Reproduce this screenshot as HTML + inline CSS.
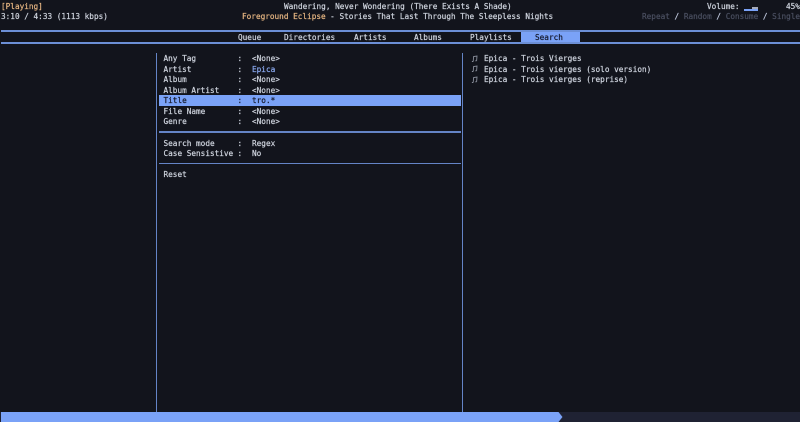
<!DOCTYPE html>
<html>
<head>
<meta charset="utf-8">
<style>
html,body{margin:0;padding:0;background:#12141c;}
#r{position:relative;width:800px;height:422px;overflow:hidden;background:#12141c;font-family:"DejaVu Sans Mono","Liberation Mono",monospace;font-size:7.72px;line-height:11px;color:#cfd4de;filter:blur(0.25px);}
#r div{position:absolute;}
.t{white-space:pre;height:11px;-webkit-text-stroke:0.2px currentColor;}
.b{color:#8aa9ef;}
.y{color:#e5b582;}
.g{color:#4a4f60;}
.s{color:#c3cbe0;}
.l{background:#6c8fd6;}
.v{background:#6484c6;}
</style>
</head>
<body>
<div id="r">
<div class="t y" style="left:1px;top:1px">[Playing]</div>
<div class="t" style="left:1px;top:11px">3:10 / 4:33 (1113 kbps)</div>
<div class="t" style="left:284px;top:1px">Wandering, Never Wondering (There Exists A Shade)</div>
<div class="t y" style="left:242px;top:11px">Foreground Eclipse</div>
<div class="t" style="left:325.5px;top:11px"> - Stories That Last Through The Sleepless Nights</div>
<div class="t" style="left:707px;top:1px">Volume:</div>
<div style="left:744px;top:9px;width:14px;height:2px;background:#7aa2f7"></div>
<div style="left:752px;top:7px;width:6px;height:2px;background:#a5aab8"></div>
<div class="t" style="left:786px;top:1px">45%</div>
<div class="t" style="left:642px;top:11px"><span class="g">Repeat</span><span class="s"> / </span><span class="g">Random</span><span class="s"> / </span><span class="g">Consume</span><span class="s"> / </span><span class="g">Single</span></div>

<div class="l" style="left:1px;top:30px;width:799px;height:2px"></div>
<div style="left:521px;top:32px;width:59px;height:10px;background:#7aa2f7"></div>
<div class="l" style="left:1px;top:42px;width:799px;height:2px"></div>
<div class="t" style="left:238px;top:32px">Queue</div>
<div class="t" style="left:284px;top:32px">Directories</div>
<div class="t" style="left:354px;top:32px">Artists</div>
<div class="t" style="left:414px;top:32px">Albums</div>
<div class="t" style="left:470px;top:32px">Playlists</div>
<div class="t" style="left:535px;top:32px;color:#14182a">Search</div>

<div class="v" style="left:156px;top:53px;width:1px;height:359px"></div>
<div class="v" style="left:462px;top:53px;width:1px;height:359px"></div>

<div class="t" style="left:163.5px;top:53px">Any Tag</div>
<div class="t" style="left:237.5px;top:53px">:</div>
<div class="t" style="left:252px;top:53px">&lt;None&gt;</div>
<div class="t" style="left:163.5px;top:64px">Artist</div>
<div class="t" style="left:237.5px;top:64px">:</div>
<div class="t b" style="left:252px;top:64px">Epica</div>
<div class="t" style="left:163.5px;top:74px">Album</div>
<div class="t" style="left:237.5px;top:74px">:</div>
<div class="t" style="left:252px;top:74px">&lt;None&gt;</div>
<div class="t" style="left:163.5px;top:85px">Album Artist</div>
<div class="t" style="left:237.5px;top:85px">:</div>
<div class="t" style="left:252px;top:85px">&lt;None&gt;</div>
<div style="left:159px;top:95px;width:302px;height:11px;background:#7aa2f7"></div>
<div class="t" style="left:163.5px;top:95px;color:#14182a">Title</div>
<div class="t" style="left:237.5px;top:95px;color:#14182a">:</div>
<div class="t" style="left:252px;top:95px;color:#14182a">tro.*</div>
<div class="t" style="left:163.5px;top:106px">File Name</div>
<div class="t" style="left:237.5px;top:106px">:</div>
<div class="t" style="left:252px;top:106px">&lt;None&gt;</div>
<div class="t" style="left:163.5px;top:116px">Genre</div>
<div class="t" style="left:237.5px;top:116px">:</div>
<div class="t" style="left:252px;top:116px">&lt;None&gt;</div>
<div class="v" style="left:159px;top:131px;width:302px;height:2px"></div>
<div class="t" style="left:163.5px;top:138px">Search mode</div>
<div class="t" style="left:237.5px;top:138px">:</div>
<div class="t" style="left:252px;top:138px">Regex</div>
<div class="t" style="left:163.5px;top:148px">Case Sensistive</div>
<div class="t" style="left:237.5px;top:148px">:</div>
<div class="t" style="left:252px;top:148px">No</div>
<div class="v" style="left:159px;top:163px;width:302px;height:1px"></div>
<div class="t" style="left:163.5px;top:169px">Reset</div>

<svg style="position:absolute;left:471px;top:55px" width="7" height="8" viewBox="0 0 7 8"><path d="M2.2 6.5L2.6 1.5L6 1L5.6 5.8M2.2 6.5H0.9M5.6 5.8H4.3" fill="none" stroke="#8a8f9c" stroke-width="0.9"/></svg>
<svg style="position:absolute;left:471px;top:65px" width="7" height="8" viewBox="0 0 7 8"><path d="M2.2 6.5L2.6 1.5L6 1L5.6 5.8M2.2 6.5H0.9M5.6 5.8H4.3" fill="none" stroke="#8a8f9c" stroke-width="0.9"/></svg>
<svg style="position:absolute;left:471px;top:76px" width="7" height="8" viewBox="0 0 7 8"><path d="M2.2 6.5L2.6 1.5L6 1L5.6 5.8M2.2 6.5H0.9M5.6 5.8H4.3" fill="none" stroke="#8a8f9c" stroke-width="0.9"/></svg>
<div class="t" style="left:484px;top:53px">Epica - Trois Vierges</div>
<div class="t" style="left:484px;top:64px">Epica - Trois vierges (solo version)</div>
<div class="t" style="left:484px;top:74px">Epica - Trois vierges (reprise)</div>

<div style="left:0;top:412px;width:800px;height:10px;background:#1f2233"></div>
<div style="left:1px;top:412px;width:556px;height:10px;background:#7aa2f7"></div>
<svg style="position:absolute;left:557px;top:412px" width="6" height="10" viewBox="0 0 6 10"><path d="M0 0H1.5L5.5 5L1.5 10H0Z" fill="#7aa2f7"/></svg>
</div>
</body>
</html>
